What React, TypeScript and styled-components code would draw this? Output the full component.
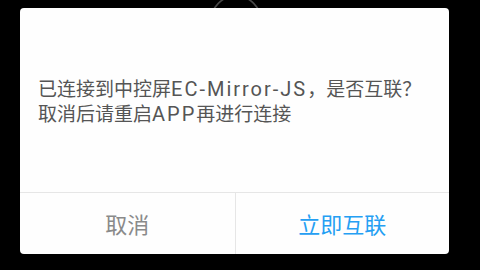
import React from "react";
import styled, { createGlobalStyle } from "styled-components";

const GlobalStyle = createGlobalStyle`
  html, body {
    margin: 0;
    padding: 0;
    background: #000;
  }
  body {
    font-family: "Noto Sans CJK SC", "Roboto", sans-serif;
  }
`;

const Screen = styled.div`
  position: relative;
  width: 480px;
  height: 270px;
  box-sizing: border-box;
  padding: 8px 31px 16px 20px;
  background: #000;
  overflow: hidden;
`;

const Ring = styled.svg`
  position: absolute;
  left: 205px;
  top: -10px;
  width: 62px;
  height: 62px;
`;

const Dialog = styled.div`
  position: relative;
  width: 429px;
  height: 246px;
  display: flex;
  flex-direction: column;
  background: #fefefe;
  border-radius: 4px;
  overflow: hidden;
`;

const Body = styled.div`
  flex: 1;
  display: flex;
  align-items: center;
  padding: 2px 16px 0 18px;
`;

const Message = styled.p`
  margin: 0;
  font-family: "Noto Sans CJK SC", sans-serif;
  font-size: 19px;
  line-height: 23px;
  color: #555;
  white-space: nowrap;
`;

const Latin = styled.span`
  font-family: "Roboto", "Noto Sans", sans-serif;
  font-size: 20px;
  letter-spacing: 2px;
`;

const Footer = styled.div`
  height: 61px;
  display: grid;
  grid-template-columns: 1fr 1fr;
  border-top: 1px solid #e6e6e6;
`;

const Action = styled.button<{ primary?: boolean }>`
  border: 0;
  background: transparent;
  font-family: "Noto Sans CJK SC", sans-serif;
  font-size: 22px;
  color: ${({ primary }) => (primary ? "#259ff3" : "#8a8a8a")};
  border-left: ${({ primary }) => (primary ? "1px solid #e6e6e6" : "none")};
  padding: 0 0 2px;
  cursor: pointer;
`;

export default function App() {
  return (
    <>
      <GlobalStyle />
      <Screen>
        <Ring viewBox="0 0 62 62">
          <circle cx="31" cy="31" r="25" fill="none" stroke="#4a4a4a" strokeWidth="1.6" />
        </Ring>
        <Dialog>
          <Body>
            <Message>
              已连接到中控屏<Latin>EC-Mirror-JS</Latin>，是否互联？
              <br />
              取消后请重启<Latin>APP</Latin>再进行连接
            </Message>
          </Body>
          <Footer>
            <Action>取消</Action>
            <Action primary>立即互联</Action>
          </Footer>
        </Dialog>
      </Screen>
    </>
  );
}
